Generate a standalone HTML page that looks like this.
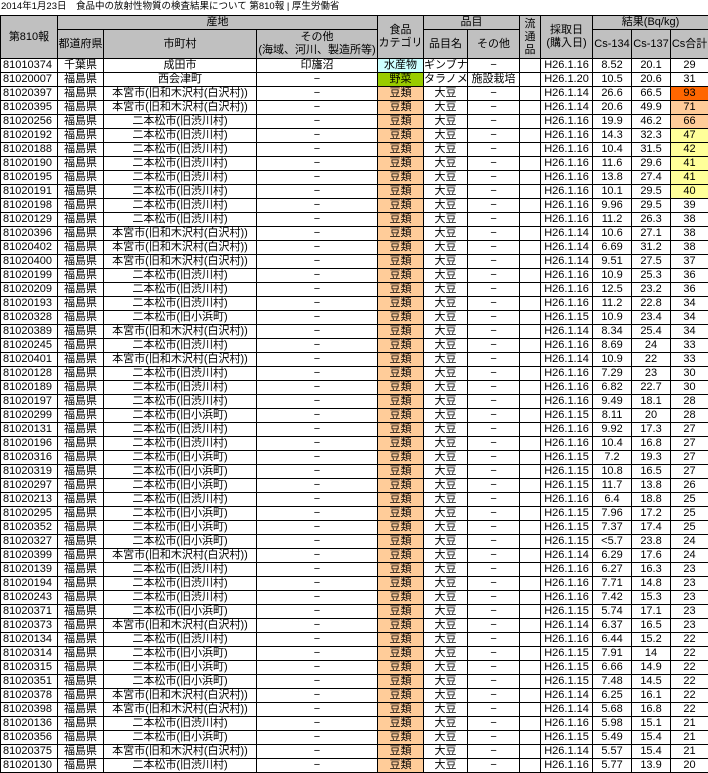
<!DOCTYPE html>
<html><head><meta charset="utf-8">
<style>
body{margin:0;background:#fff;width:708px;height:772px;overflow:hidden;font-family:"Liberation Sans","Noto Sans CJK JP",sans-serif;font-size:11px;color:#000}
.t{height:15px;line-height:14px;padding-left:1px;white-space:nowrap;font-size:9.5px}
table{border-collapse:collapse;table-layout:fixed;width:708px}
td{border:1px solid #000;padding:0;height:13px;line-height:13px;text-align:center;white-space:nowrap;overflow:hidden;font-size:11px}
td.i{text-align:left;padding-left:2px}
th{border:1px solid #000;background:#c0c0c0;font-weight:normal;padding:0;font-size:11px;line-height:13px;overflow:hidden;white-space:nowrap}
.c{background:#ccffff}.g{background:#99cc00}.p{background:#ffcc99}.o{background:#ff6600}.y{background:#ffff99}
</style></head><body>
<div class="t">2014年1月23日　食品中の放射性物質の検査結果について 第810報 | 厚生労働省</div>
<table>
<colgroup><col style="width:57px"><col style="width:46px"><col style="width:153px"><col style="width:121px"><col style="width:46px"><col style="width:44px"><col style="width:52px"><col style="width:21px"><col style="width:52px"><col style="width:39px"><col style="width:39px"><col style="width:38px"></colgroup>
<tr style="height:13px"><th rowspan="2">第810報</th><th colspan="3">産地</th><th rowspan="2">食品<br>カテゴリ</th><th colspan="2">品目</th><th rowspan="2">流<br>通<br>品</th><th rowspan="2">採取日<br>(購入日)</th><th colspan="3">結果(Bq/kg)</th></tr>
<tr style="height:29px"><th>都道府県</th><th>市町村</th><th>その他<br>(海域、河川、製造所等)</th><th>品目名</th><th>その他</th><th>Cs-134</th><th>Cs-137</th><th>Cs合計</th></tr>
<tr><td class="i">81010374</td><td>千葉県</td><td>成田市</td><td>印旛沼</td><td class="c">水産物</td><td>ギンブナ</td><td>−</td><td></td><td>H26.1.16</td><td>8.52</td><td>20.1</td><td>29</td></tr>
<tr><td class="i">81020007</td><td>福島県</td><td>西会津町</td><td>−</td><td class="g">野菜</td><td>タラノメ</td><td>施設栽培</td><td></td><td>H26.1.20</td><td>10.5</td><td>20.6</td><td>31</td></tr>
<tr><td class="i">81020397</td><td>福島県</td><td>本宮市(旧和木沢村(白沢村))</td><td>−</td><td class="p">豆類</td><td>大豆</td><td>−</td><td></td><td>H26.1.14</td><td>26.6</td><td>66.5</td><td class="o">93</td></tr>
<tr><td class="i">81020395</td><td>福島県</td><td>本宮市(旧和木沢村(白沢村))</td><td>−</td><td class="p">豆類</td><td>大豆</td><td>−</td><td></td><td>H26.1.14</td><td>20.6</td><td>49.9</td><td class="p">71</td></tr>
<tr><td class="i">81020256</td><td>福島県</td><td>二本松市(旧渋川村)</td><td>−</td><td class="p">豆類</td><td>大豆</td><td>−</td><td></td><td>H26.1.16</td><td>19.9</td><td>46.2</td><td class="p">66</td></tr>
<tr><td class="i">81020192</td><td>福島県</td><td>二本松市(旧渋川村)</td><td>−</td><td class="p">豆類</td><td>大豆</td><td>−</td><td></td><td>H26.1.16</td><td>14.3</td><td>32.3</td><td class="y">47</td></tr>
<tr><td class="i">81020188</td><td>福島県</td><td>二本松市(旧渋川村)</td><td>−</td><td class="p">豆類</td><td>大豆</td><td>−</td><td></td><td>H26.1.16</td><td>10.4</td><td>31.5</td><td class="y">42</td></tr>
<tr><td class="i">81020190</td><td>福島県</td><td>二本松市(旧渋川村)</td><td>−</td><td class="p">豆類</td><td>大豆</td><td>−</td><td></td><td>H26.1.16</td><td>11.6</td><td>29.6</td><td class="y">41</td></tr>
<tr><td class="i">81020195</td><td>福島県</td><td>二本松市(旧渋川村)</td><td>−</td><td class="p">豆類</td><td>大豆</td><td>−</td><td></td><td>H26.1.16</td><td>13.8</td><td>27.4</td><td class="y">41</td></tr>
<tr><td class="i">81020191</td><td>福島県</td><td>二本松市(旧渋川村)</td><td>−</td><td class="p">豆類</td><td>大豆</td><td>−</td><td></td><td>H26.1.16</td><td>10.1</td><td>29.5</td><td class="y">40</td></tr>
<tr><td class="i">81020198</td><td>福島県</td><td>二本松市(旧渋川村)</td><td>−</td><td class="p">豆類</td><td>大豆</td><td>−</td><td></td><td>H26.1.16</td><td>9.96</td><td>29.5</td><td>39</td></tr>
<tr><td class="i">81020129</td><td>福島県</td><td>二本松市(旧渋川村)</td><td>−</td><td class="p">豆類</td><td>大豆</td><td>−</td><td></td><td>H26.1.16</td><td>11.2</td><td>26.3</td><td>38</td></tr>
<tr><td class="i">81020396</td><td>福島県</td><td>本宮市(旧和木沢村(白沢村))</td><td>−</td><td class="p">豆類</td><td>大豆</td><td>−</td><td></td><td>H26.1.14</td><td>10.6</td><td>27.1</td><td>38</td></tr>
<tr><td class="i">81020402</td><td>福島県</td><td>本宮市(旧和木沢村(白沢村))</td><td>−</td><td class="p">豆類</td><td>大豆</td><td>−</td><td></td><td>H26.1.14</td><td>6.69</td><td>31.2</td><td>38</td></tr>
<tr><td class="i">81020400</td><td>福島県</td><td>本宮市(旧和木沢村(白沢村))</td><td>−</td><td class="p">豆類</td><td>大豆</td><td>−</td><td></td><td>H26.1.14</td><td>9.51</td><td>27.5</td><td>37</td></tr>
<tr><td class="i">81020199</td><td>福島県</td><td>二本松市(旧渋川村)</td><td>−</td><td class="p">豆類</td><td>大豆</td><td>−</td><td></td><td>H26.1.16</td><td>10.9</td><td>25.3</td><td>36</td></tr>
<tr><td class="i">81020209</td><td>福島県</td><td>二本松市(旧渋川村)</td><td>−</td><td class="p">豆類</td><td>大豆</td><td>−</td><td></td><td>H26.1.16</td><td>12.5</td><td>23.2</td><td>36</td></tr>
<tr><td class="i">81020193</td><td>福島県</td><td>二本松市(旧渋川村)</td><td>−</td><td class="p">豆類</td><td>大豆</td><td>−</td><td></td><td>H26.1.16</td><td>11.2</td><td>22.8</td><td>34</td></tr>
<tr><td class="i">81020328</td><td>福島県</td><td>二本松市(旧小浜町)</td><td>−</td><td class="p">豆類</td><td>大豆</td><td>−</td><td></td><td>H26.1.15</td><td>10.9</td><td>23.4</td><td>34</td></tr>
<tr><td class="i">81020389</td><td>福島県</td><td>本宮市(旧和木沢村(白沢村))</td><td>−</td><td class="p">豆類</td><td>大豆</td><td>−</td><td></td><td>H26.1.14</td><td>8.34</td><td>25.4</td><td>34</td></tr>
<tr><td class="i">81020245</td><td>福島県</td><td>二本松市(旧渋川村)</td><td>−</td><td class="p">豆類</td><td>大豆</td><td>−</td><td></td><td>H26.1.16</td><td>8.69</td><td>24</td><td>33</td></tr>
<tr><td class="i">81020401</td><td>福島県</td><td>本宮市(旧和木沢村(白沢村))</td><td>−</td><td class="p">豆類</td><td>大豆</td><td>−</td><td></td><td>H26.1.14</td><td>10.9</td><td>22</td><td>33</td></tr>
<tr><td class="i">81020128</td><td>福島県</td><td>二本松市(旧渋川村)</td><td>−</td><td class="p">豆類</td><td>大豆</td><td>−</td><td></td><td>H26.1.16</td><td>7.29</td><td>23</td><td>30</td></tr>
<tr><td class="i">81020189</td><td>福島県</td><td>二本松市(旧渋川村)</td><td>−</td><td class="p">豆類</td><td>大豆</td><td>−</td><td></td><td>H26.1.16</td><td>6.82</td><td>22.7</td><td>30</td></tr>
<tr><td class="i">81020197</td><td>福島県</td><td>二本松市(旧渋川村)</td><td>−</td><td class="p">豆類</td><td>大豆</td><td>−</td><td></td><td>H26.1.16</td><td>9.49</td><td>18.1</td><td>28</td></tr>
<tr><td class="i">81020299</td><td>福島県</td><td>二本松市(旧小浜町)</td><td>−</td><td class="p">豆類</td><td>大豆</td><td>−</td><td></td><td>H26.1.15</td><td>8.11</td><td>20</td><td>28</td></tr>
<tr><td class="i">81020131</td><td>福島県</td><td>二本松市(旧渋川村)</td><td>−</td><td class="p">豆類</td><td>大豆</td><td>−</td><td></td><td>H26.1.16</td><td>9.92</td><td>17.3</td><td>27</td></tr>
<tr><td class="i">81020196</td><td>福島県</td><td>二本松市(旧渋川村)</td><td>−</td><td class="p">豆類</td><td>大豆</td><td>−</td><td></td><td>H26.1.16</td><td>10.4</td><td>16.8</td><td>27</td></tr>
<tr><td class="i">81020316</td><td>福島県</td><td>二本松市(旧小浜町)</td><td>−</td><td class="p">豆類</td><td>大豆</td><td>−</td><td></td><td>H26.1.15</td><td>7.2</td><td>19.3</td><td>27</td></tr>
<tr><td class="i">81020319</td><td>福島県</td><td>二本松市(旧小浜町)</td><td>−</td><td class="p">豆類</td><td>大豆</td><td>−</td><td></td><td>H26.1.15</td><td>10.8</td><td>16.5</td><td>27</td></tr>
<tr><td class="i">81020297</td><td>福島県</td><td>二本松市(旧小浜町)</td><td>−</td><td class="p">豆類</td><td>大豆</td><td>−</td><td></td><td>H26.1.15</td><td>11.7</td><td>13.8</td><td>26</td></tr>
<tr><td class="i">81020213</td><td>福島県</td><td>二本松市(旧渋川村)</td><td>−</td><td class="p">豆類</td><td>大豆</td><td>−</td><td></td><td>H26.1.16</td><td>6.4</td><td>18.8</td><td>25</td></tr>
<tr><td class="i">81020295</td><td>福島県</td><td>二本松市(旧小浜町)</td><td>−</td><td class="p">豆類</td><td>大豆</td><td>−</td><td></td><td>H26.1.15</td><td>7.96</td><td>17.2</td><td>25</td></tr>
<tr><td class="i">81020352</td><td>福島県</td><td>二本松市(旧小浜町)</td><td>−</td><td class="p">豆類</td><td>大豆</td><td>−</td><td></td><td>H26.1.15</td><td>7.37</td><td>17.4</td><td>25</td></tr>
<tr><td class="i">81020327</td><td>福島県</td><td>二本松市(旧小浜町)</td><td>−</td><td class="p">豆類</td><td>大豆</td><td>−</td><td></td><td>H26.1.15</td><td>&lt;5.7</td><td>23.8</td><td>24</td></tr>
<tr><td class="i">81020399</td><td>福島県</td><td>本宮市(旧和木沢村(白沢村))</td><td>−</td><td class="p">豆類</td><td>大豆</td><td>−</td><td></td><td>H26.1.14</td><td>6.29</td><td>17.6</td><td>24</td></tr>
<tr><td class="i">81020139</td><td>福島県</td><td>二本松市(旧渋川村)</td><td>−</td><td class="p">豆類</td><td>大豆</td><td>−</td><td></td><td>H26.1.16</td><td>6.27</td><td>16.3</td><td>23</td></tr>
<tr><td class="i">81020194</td><td>福島県</td><td>二本松市(旧渋川村)</td><td>−</td><td class="p">豆類</td><td>大豆</td><td>−</td><td></td><td>H26.1.16</td><td>7.71</td><td>14.8</td><td>23</td></tr>
<tr><td class="i">81020243</td><td>福島県</td><td>二本松市(旧渋川村)</td><td>−</td><td class="p">豆類</td><td>大豆</td><td>−</td><td></td><td>H26.1.16</td><td>7.42</td><td>15.3</td><td>23</td></tr>
<tr><td class="i">81020371</td><td>福島県</td><td>二本松市(旧小浜町)</td><td>−</td><td class="p">豆類</td><td>大豆</td><td>−</td><td></td><td>H26.1.15</td><td>5.74</td><td>17.1</td><td>23</td></tr>
<tr><td class="i">81020373</td><td>福島県</td><td>本宮市(旧和木沢村(白沢村))</td><td>−</td><td class="p">豆類</td><td>大豆</td><td>−</td><td></td><td>H26.1.14</td><td>6.37</td><td>16.5</td><td>23</td></tr>
<tr><td class="i">81020134</td><td>福島県</td><td>二本松市(旧渋川村)</td><td>−</td><td class="p">豆類</td><td>大豆</td><td>−</td><td></td><td>H26.1.16</td><td>6.44</td><td>15.2</td><td>22</td></tr>
<tr><td class="i">81020314</td><td>福島県</td><td>二本松市(旧小浜町)</td><td>−</td><td class="p">豆類</td><td>大豆</td><td>−</td><td></td><td>H26.1.15</td><td>7.91</td><td>14</td><td>22</td></tr>
<tr><td class="i">81020315</td><td>福島県</td><td>二本松市(旧小浜町)</td><td>−</td><td class="p">豆類</td><td>大豆</td><td>−</td><td></td><td>H26.1.15</td><td>6.66</td><td>14.9</td><td>22</td></tr>
<tr><td class="i">81020351</td><td>福島県</td><td>二本松市(旧小浜町)</td><td>−</td><td class="p">豆類</td><td>大豆</td><td>−</td><td></td><td>H26.1.15</td><td>7.48</td><td>14.5</td><td>22</td></tr>
<tr><td class="i">81020378</td><td>福島県</td><td>本宮市(旧和木沢村(白沢村))</td><td>−</td><td class="p">豆類</td><td>大豆</td><td>−</td><td></td><td>H26.1.14</td><td>6.25</td><td>16.1</td><td>22</td></tr>
<tr><td class="i">81020398</td><td>福島県</td><td>本宮市(旧和木沢村(白沢村))</td><td>−</td><td class="p">豆類</td><td>大豆</td><td>−</td><td></td><td>H26.1.14</td><td>5.68</td><td>16.8</td><td>22</td></tr>
<tr><td class="i">81020136</td><td>福島県</td><td>二本松市(旧渋川村)</td><td>−</td><td class="p">豆類</td><td>大豆</td><td>−</td><td></td><td>H26.1.16</td><td>5.98</td><td>15.1</td><td>21</td></tr>
<tr><td class="i">81020356</td><td>福島県</td><td>二本松市(旧小浜町)</td><td>−</td><td class="p">豆類</td><td>大豆</td><td>−</td><td></td><td>H26.1.15</td><td>5.49</td><td>15.4</td><td>21</td></tr>
<tr><td class="i">81020375</td><td>福島県</td><td>本宮市(旧和木沢村(白沢村))</td><td>−</td><td class="p">豆類</td><td>大豆</td><td>−</td><td></td><td>H26.1.14</td><td>5.57</td><td>15.4</td><td>21</td></tr>
<tr><td class="i">81020130</td><td>福島県</td><td>二本松市(旧渋川村)</td><td>−</td><td class="p">豆類</td><td>大豆</td><td>−</td><td></td><td>H26.1.16</td><td>5.77</td><td>13.9</td><td>20</td></tr>
</table>
</body></html>
